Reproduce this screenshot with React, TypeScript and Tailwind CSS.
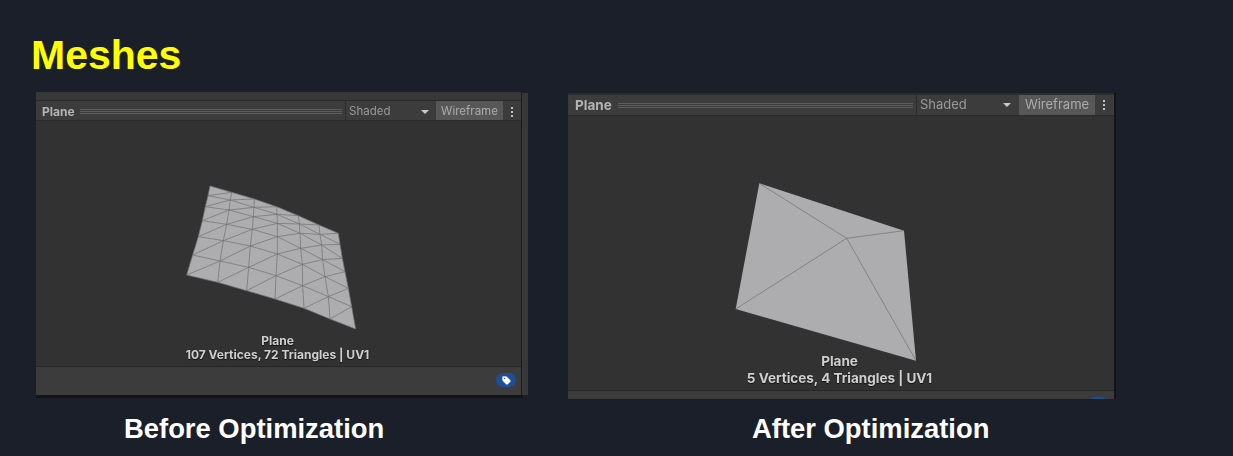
import { Tag } from 'lucide-react'

// Mesh vertices traced from the reference, one array per column (col -> row)
const gridX = [
  [120, 114, 106, 97, 85, 68, 50],
  [185, 181, 177, 170, 160, 150, 143],
  [253, 252, 250, 247, 241, 236, 230],
  [320, 321, 322, 322, 322, 318, 315],
  [385, 388, 390, 392, 397, 398, 402],
  [447, 450, 455, 458, 465, 475, 480],
  [505, 510, 517, 525, 535, 545, 557],
]
const gridY = [
  [33, 62, 95, 137, 185, 240, 300],
  [52, 75, 105, 148, 197, 258, 322],
  [72, 97, 125, 163, 213, 277, 347],
  [95, 118, 145, 185, 237, 302, 372],
  [122, 147, 175, 220, 268, 332, 400],
  [150, 178, 210, 254, 305, 365, 432],
  [175, 208, 250, 290, 340, 395, 462],
]

function gridLines() {
  const lines: string[] = []
  for (let c = 0; c < 7; c++) {
    for (let r = 0; r < 7; r++) {
      if (r < 6) lines.push(`M${gridX[c][r]} ${gridY[c][r]}L${gridX[c][r + 1]} ${gridY[c][r + 1]}`)
      if (c < 6) lines.push(`M${gridX[c][r]} ${gridY[c][r]}L${gridX[c + 1][r]} ${gridY[c + 1][r]}`)
      // diagonal runs from lower left to upper right of each cell
      if (r < 6 && c < 6) lines.push(`M${gridX[c][r + 1]} ${gridY[c][r + 1]}L${gridX[c + 1][r]} ${gridY[c + 1][r]}`)
    }
  }
  return lines.join('')
}

function GripLines({ className }: { className: string }) {
  return (
    <div className={`flex flex-col gap-[1px] ${className}`}>
      <div className="h-px bg-[#5c5c5c]" />
      <div className="h-px bg-[#5c5c5c]" />
      <div className="h-px bg-[#5c5c5c]" />
    </div>
  )
}

function Dots() {
  return (
    <div className="flex flex-col gap-[2px] items-center w-full">
      <div className="w-[2px] h-[2px] bg-[#c0c0c0]" />
      <div className="w-[2px] h-[2px] bg-[#c0c0c0]" />
      <div className="w-[2px] h-[2px] bg-[#c0c0c0]" />
    </div>
  )
}

function Arrow() {
  return <div className="w-0 h-0 border-x-[4px] border-x-transparent border-t-[4px] border-t-[#c8c8c8]" />
}

export default function App() {
  return (
    <div className="w-[1233px] h-[456px] overflow-hidden bg-[#1b1f29] font-['Liberation_Sans',sans-serif]">
      <h1 className="pl-[31px] pt-[32px] h-[92px] text-[41px] leading-[46px] font-bold text-[#ffff00]">Meshes</h1>

      <div className="flex items-start pl-[36px]">
        {/* Before */}
        <div className="w-[492px] flex flex-col">
          <div className="h-[306px] flex flex-col blur-[0.4px] font-['Inter',sans-serif]">
            <div className="flex flex-1 min-h-0">
              <div className="w-[485px] flex flex-col">
                <div className="h-[9px] bg-[#383838] border-b border-[#2a2a2a]" />
                <div className="h-[20px] flex items-center bg-[#3c3c3c] border-b border-[#2a2a2a] text-[11.5px] text-[#a4a4a4]">
                  <span className="ml-[6px] w-[38px] pt-[2px] text-[12px] font-bold text-[#b4b4b4]">Plane</span>
                  <GripLines className="w-[262px] mt-[2px]" />
                  <div className="ml-[3px] h-full w-[91px] flex items-center border-l border-[#2c2c2c] pl-[3px] pt-[3px]">
                    <span className="w-[72px] text-[#9a9a9a]">Shaded</span>
                    <Arrow />
                  </div>
                  <div className="h-full w-[67px] pt-[3px] flex items-center justify-center bg-[#575757] text-[#ababab]">Wireframe</div>
                  <div className="w-[17px] pt-[2px]"><Dots /></div>
                </div>
                <div className="flex-1 flex flex-col bg-[#323232] pt-[54px]">
                  <svg viewBox="0 0 600 474" className="ml-[134px] w-[200px] h-[158px]">
                    <polygon
                      points="120,33 185,52 253,72 320,95 385,122 447,150 505,175 510,208 517,250 525,290 535,340 545,395 557,462 480,432 402,400 315,372 230,347 143,322 50,300 68,240 85,185 97,137 106,95 114,62"
                      fill="#adadaf"
                    />
                    <path d={gridLines()} fill="none" stroke="#737375" strokeWidth="2.2" />
                  </svg>
                  <div className="flex flex-col items-center pr-[2px] mt-[1px] text-[12px] leading-[14px] font-bold text-[#cfcfcf] [text-shadow:0_1px_1px_#111]">
                    <span>Plane</span>
                    <span>107 Vertices, 72 Triangles | UV1</span>
                  </div>
                </div>
                <div className="h-[29px] pb-[2px] flex items-center justify-end bg-[#3c3c3c] border-t border-[#262626] pr-[5px]">
                  <div className="w-[20px] h-[14px] flex items-center justify-center rounded-full bg-[#1f4e99]">
                    <Tag size={11} className="text-[#1f4e99] fill-white" />
                  </div>
                </div>
              </div>
              <div className="w-[7px] mt-[1px] bg-[#383838] border-l border-[#1c1c1c]" />
            </div>
            <div className="h-[3px] w-[487px] bg-[#141414]" />
          </div>
          <div className="pl-[88px] mt-[15px] text-[27.4px] leading-[32px] font-bold text-white">Before Optimization</div>
        </div>

        {/* After */}
        <div className="ml-[40px] w-[548px] flex flex-col mt-[1px]">
          <div className="h-[306px] flex flex-col blur-[0.4px] font-['Inter',sans-serif] border-r-2 border-[#141414]">
            <div className="h-[2px] bg-[#2c2c2c]" />
            <div className="h-[21px] flex items-center bg-[#3c3c3c] border-b border-[#2a2a2a] text-[13px] text-[#a4a4a4]">
              <span className="ml-[7px] w-[43px] text-[13.5px] font-bold text-[#b4b4b4]">Plane</span>
              <GripLines className="w-[295px]" />
              <div className="ml-[3px] h-full w-[103px] flex items-center border-l border-[#2c2c2c] pl-[3px]">
                <span className="w-[83px] text-[#9a9a9a]">Shaded</span>
                <Arrow />
              </div>
              <div className="h-full w-[76px] flex items-center justify-center bg-[#575757] text-[#ababab]">Wireframe</div>
              <div className="w-[18px]"><Dots /></div>
            </div>
            <div className="flex-1 flex flex-col bg-[#323232] pt-[54px]">
              <svg viewBox="0 0 630 576" className="ml-[152px] w-[210px] h-[192px]">
                <polygon points="118,40 552,182 588,572 47,417" fill="#adadaf" />
                <path d="M118 40L380 205M552 182L380 205M588 572L380 205M47 417L380 205" fill="none" stroke="#737375" strokeWidth="2.2" />
              </svg>
              <div className="flex flex-col items-center pr-[3px] mt-[-9px] text-[13.5px] leading-[17px] font-bold text-[#cfcfcf] [text-shadow:0_1px_1px_#111]">
                <span>Plane</span>
                <span>5 Vertices, 4 Triangles | UV1</span>
              </div>
            </div>
            <div className="h-[9px] overflow-hidden flex justify-end bg-[#3c3c3c] border-t border-[#262626] pr-[6px]">
              <div className="w-[20px] h-[14px] mt-[6px] rounded-full bg-[#1f4e99]" />
            </div>
          </div>
          <div className="pl-[184px] mt-[14px] text-[27.4px] leading-[32px] font-bold text-white">After Optimization</div>
        </div>
      </div>
    </div>
  )
}
